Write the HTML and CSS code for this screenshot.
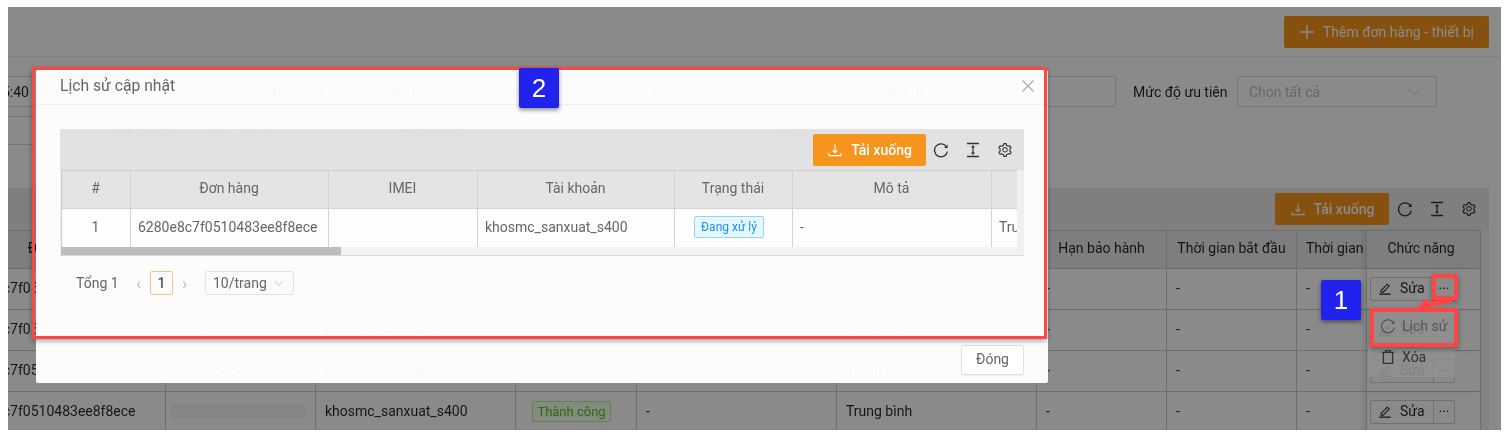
FILE: index.html
```html
<!DOCTYPE html>
<html lang="en">
<head>
  <meta charset="UTF-8" />
  <meta name="viewport" content="width=device-width, initial-scale=1.0" />
  <title>Lịch sử cập nhật</title>
  <link rel="stylesheet" href="styles.css">
</head>
<body>
  <svg class="defs" width="0" height="0">
    <symbol id="i-plus" viewBox="0 0 16 16"><path d="M8 1.5v13M1.5 8h13" fill="none" stroke="currentColor" stroke-width="1.6"/></symbol>
    <symbol id="i-down" viewBox="0 0 16 16"><path d="M8 2v8.5M5.6 8.2L8 10.6l2.4-2.4M2 11v2.6h12V11" fill="none" stroke="currentColor" stroke-width="1.1"/></symbol>
    <symbol id="i-reload" viewBox="0 0 16 16"><path d="M13.6 5A6.5 6.5 0 1 0 14.4 9.6" fill="none" stroke="currentColor" stroke-width="1.3"/><path d="M14.6 2.4v3.6h-3.6z" fill="currentColor"/></symbol>
    <symbol id="i-height" viewBox="0 0 16 16"><path d="M2 1.5h12M2 14.5h12" fill="none" stroke="currentColor" stroke-width="1.4"/><path d="M8 4v8" fill="none" stroke="currentColor" stroke-width="1.2"/><path d="M8 3l2 2.6H6zM8 13l-2-2.6h4z" fill="currentColor"/></symbol>
    <symbol id="i-gear" viewBox="0 0 1024 1024"><path fill="currentColor" d="M924.8 625.7l-65.5-56c3.1-19 4.7-38.4 4.7-57.8s-1.6-38.8-4.7-57.8l65.5-56a32.03 32.03 0 0 0 9.3-35.2l-.9-2.6a443.74 443.74 0 0 0-79.7-137.9l-1.8-2.1a32.12 32.12 0 0 0-35.1-9.5l-81.3 28.9c-30-24.6-63.5-44-99.7-57.6l-15.7-85a32.05 32.05 0 0 0-25.8-25.7l-2.7-.5c-52.1-9.4-106.9-9.4-159 0l-2.7.5a32.05 32.05 0 0 0-25.8 25.7l-15.8 85.4a351.86 351.86 0 0 0-99 57.4l-81.9-29.1a32 32 0 0 0-35.1 9.5l-1.8 2.1a446.02 446.02 0 0 0-79.7 137.9l-.9 2.6c-4.5 12.5-.8 26.5 9.3 35.2l66.3 56.6c-3.1 18.8-4.6 38-4.6 57.1 0 19.2 1.5 38.4 4.6 57.1L99 625.5a32.03 32.03 0 0 0-9.3 35.2l.9 2.6c18.1 50.4 44.9 96.9 79.7 137.9l1.8 2.1a32.12 32.12 0 0 0 35.1 9.5l81.9-29.1c29.8 24.5 63.1 43.9 99 57.4l15.8 85.4a32.05 32.05 0 0 0 25.8 25.7l2.7.5a449.4 449.4 0 0 0 159 0l2.7-.5a32.05 32.05 0 0 0 25.8-25.7l15.7-85a350 350 0 0 0 99.7-57.6l81.3 28.9a32 32 0 0 0 35.1-9.5l1.8-2.1c34.8-41.1 61.6-87.5 79.7-137.9l.9-2.6c4.5-12.3.8-26.3-9.3-35zM788.3 465.9c2.5 15.1 3.8 30.6 3.8 46.1s-1.3 31-3.8 46.1l-6.6 40.1 74.7 63.9a370.03 370.03 0 0 1-42.6 73.6L721 702.8l-31.4 25.8c-23.9 19.6-50.5 35-79.3 45.8l-38.1 14.3-17.9 97a377.5 377.5 0 0 1-85 0l-17.9-97.2-37.8-14.5c-28.5-10.8-55-26.2-78.7-45.7l-31.4-25.9-93.4 33.2c-17-22.9-31.2-47.6-42.6-73.6l75.5-64.5-6.5-40c-2.4-14.9-3.7-30.3-3.7-45.5 0-15.3 1.2-30.6 3.7-45.5l6.5-40-75.5-64.5c11.3-26.1 25.6-50.7 42.6-73.6l93.4 33.2 31.4-25.9c23.7-19.5 50.2-34.9 78.7-45.7l37.9-14.3 17.9-97.2c28.1-3.2 56.8-3.2 85 0l17.9 97 38.1 14.3c28.7 10.8 55.4 26.2 79.3 45.8l31.4 25.8 92.8-32.9c17 22.9 31.2 47.6 42.6 73.6L781.8 426l6.5 39.9zM512 326c-97.2 0-176 78.8-176 176s78.8 176 176 176 176-78.8 176-176-78.8-176-176-176zm79.2 255.2A111.6 111.6 0 0 1 512 614c-29.9 0-58-11.7-79.2-32.8A111.6 111.6 0 0 1 400 502c0-29.9 11.7-58 32.8-79.2C454 401.6 482.1 390 512 390c29.9 0 58 11.6 79.2 32.8A111.6 111.6 0 0 1 624 502c0 29.9-11.7 58-32.8 79.2z"/></symbol>
    <symbol id="i-edit" viewBox="0 0 16 16"><path d="M3.6 10.6l7-7 2.2 2.2-7 7H3.4zM1.5 15h13" fill="none" stroke="currentColor" stroke-width="1.2"/></symbol>
    <symbol id="i-trash" viewBox="0 0 16 16"><path d="M5.5 3V1.6h5V3M1.8 3.4h12.4M3.4 3.4v11h9.2v-11" fill="none" stroke="currentColor" stroke-width="1.3"/></symbol>
    <symbol id="i-chev" viewBox="0 0 16 16"><path d="M2 5l6 6 6-6" fill="none" stroke="currentColor" stroke-width="1"/></symbol>
    <symbol id="i-close" viewBox="0 0 12 12"><path d="M.5.5l11 11M11.5.5l-11 11" fill="none" stroke="currentColor" stroke-width="1.2"/></symbol>
  </svg>

  <div class="shot">
    <div class="page">
      <div class="topbar">
        <button class="btn-orange btn-add"><svg class="ic ic-plus"><use href="#i-plus"/></svg>Thêm đơn hàng - thiết bị</button>
      </div>

      <div class="filters filters-one">
        <div class="box box-range"><span>13/05/2022 10:15:40</span><span>13/05/2022 15:55:40</span></div>
        <label class="lb lb-account">Tài khoản</label>
        <div class="box box-account">54005 khosmc_sanxuat</div>
        <label class="lb lb-imei">IMEI</label>
        <div class="box box-imei"></div>
        <label class="lb lb-desc">Mô tả</label>
        <div class="box box-desc"></div>
        <label class="lb lb-prio">Mức độ ưu tiên</label>
        <div class="box box-select"><span class="ph">Chọn tất cả</span><svg class="ic-chev"><use href="#i-chev"/></svg></div>
      </div>

      <div class="filters filters-two">
        <div class="box box-left"></div>
        <label class="lb lb-type">Phân loại</label>
        <div class="box box-type"><span class="ph">Chọn tất cả</span></div>
        <div class="box box-order">Đơn hàng</div>
        <button class="btn-orange btn-search">Tìm kiếm</button>
        <button class="btn-reset">Đặt lại</button>
      </div>

      <div class="toolbar toolbar-page">
        <button class="btn-orange btn-dl"><svg class="ic"><use href="#i-down"/></svg>Tải xuống</button>
        <svg class="tool"><use href="#i-reload"/></svg>
        <svg class="tool"><use href="#i-height"/></svg>
        <svg class="tool"><use href="#i-gear"/></svg>
      </div>

      <div class="list-wrap">
        <table class="list">
          <colgroup>
            <col class="c1"><col class="c2"><col class="c3"><col class="c4"><col class="c5"><col class="c6"><col class="c7"><col class="c8"><col class="c9"><col class="c10">
          </colgroup>
          <thead>
            <tr>
              <th>Đơn hàng</th><th>IMEI</th><th>Tài khoản</th><th>Trạng thái</th><th>Mô tả</th><th>Mức độ ưu tiên</th><th>Hạn bảo hành</th><th>Thời gian bắt đầu</th><th class="cut">Thời gian kết thúc</th><th class="fixed">Chức năng</th>
            </tr>
          </thead>
          <tbody>
            <tr>
              <td>6280e8c7f0510483ee8f8ece</td><td>8e5485053834658</td><td>khosmc_sanxuat_s400</td><td><span class="tag-ok">Thành công</span></td><td>-</td><td>Trung bình</td><td>-</td><td>-</td><td class="cut">-</td>
              <td class="fixed"><div class="acts"><span class="act-edit"><svg class="ic-edit"><use href="#i-edit"/></svg>Sửa</span><span class="act-more">···</span></div></td>
            </tr>
            <tr>
              <td>6280e8c7f0510483ee8f8ece</td><td>8e5185053834686</td><td>khosmc_sanxuat_s400</td><td><span class="tag-ok">Thành công</span></td><td>-</td><td>Trung bình</td><td>-</td><td>-</td><td class="cut">-</td>
              <td class="fixed"><div class="acts"><span class="act-edit"><svg class="ic-edit"><use href="#i-edit"/></svg>Sửa</span><span class="act-more">···</span></div></td>
            </tr>
            <tr>
              <td>6280e8c7f0510483ee8f8ece</td><td>8e5485053834658</td><td>khosmc_sanxuat_s400</td><td><span class="tag-ok">Thành công</span></td><td>-</td><td>Trung bình</td><td>-</td><td>-</td><td class="cut">-</td>
              <td class="fixed"><div class="acts"><span class="act-edit"><svg class="ic-edit"><use href="#i-edit"/></svg>Sửa</span><span class="act-more">···</span></div></td>
            </tr>
            <tr>
              <td>6280e8c7f0510483ee8f8ece</td><td><span class="redact"></span></td><td>khosmc_sanxuat_s400</td><td><span class="tag-ok">Thành công</span></td><td>-</td><td>Trung bình</td><td>-</td><td>-</td><td class="cut">-</td>
              <td class="fixed"><div class="acts"><span class="act-edit"><svg class="ic-edit"><use href="#i-edit"/></svg>Sửa</span><span class="act-more">···</span></div></td>
            </tr>
          </tbody>
        </table>
      </div>
    </div>

    <div class="mask"></div>

    <div class="menu">
      <div class="menu-item menu-faded"><svg class="ic-menu"><use href="#i-reload"/></svg>Lịch sử</div>
      <div class="menu-item"><svg class="ic-menu"><use href="#i-trash"/></svg>Xóa</div>
    </div>

    <div class="modal">
      <div class="modal-head">
        <span>Lịch sử cập nhật</span>
        <svg class="modal-x"><use href="#i-close"/></svg>
      </div>
      <div class="modal-body">
        <div class="toolbar toolbar-modal">
          <button class="btn-orange btn-dl"><svg class="ic"><use href="#i-down"/></svg>Tải xuống</button>
          <svg class="tool"><use href="#i-reload"/></svg>
          <svg class="tool"><use href="#i-height"/></svg>
          <svg class="tool"><use href="#i-gear"/></svg>
        </div>
        <div class="log-wrap">
          <div class="log-scroll">
            <table class="log">
              <colgroup>
                <col class="l1"><col class="l2"><col class="l3"><col class="l4"><col class="l5"><col class="l6"><col class="l7">
              </colgroup>
              <thead>
                <tr><th>#</th><th>Đơn hàng</th><th>IMEI</th><th>Tài khoản</th><th>Trạng thái</th><th>Mô tả</th><th></th></tr>
              </thead>
              <tbody>
                <tr>
                  <td class="center">1</td><td>6280e8c7f0510483ee8f8ece</td><td></td><td>khosmc_sanxuat_s400</td><td><span class="tag-run">Đang xử lý</span></td><td>-</td><td>Trung bình</td>
                </tr>
              </tbody>
            </table>
            <div class="hbar"><div class="hbar-thumb"></div></div>
          </div>
        </div>
        <div class="pager">
          <span class="total">Tổng 1</span>
          <span class="arrow">‹</span>
          <span class="page-no">1</span>
          <span class="arrow">›</span>
          <span class="size">10/trang<svg class="ic-chev-sm"><use href="#i-chev"/></svg></span>
        </div>
      </div>
      <div class="modal-foot"><button class="btn-close">Đóng</button></div>
    </div>

    <div class="note note-modal"></div>
    <div class="note note-more"></div>
    <div class="note note-history"></div>
    <svg class="note-arrow" viewBox="0 0 44 18"><polygon points="2,14 12,2 14,6 38,1 39,6 16,11 17,15" fill="#ff4545"/></svg>
    <div class="step step-two">2</div>
    <div class="step step-one">1</div>
  </div>
</body>
</html>
```

FILE: styles.css
```css
* {
  box-sizing: border-box;
}

html, body {
  margin: 0;
  height: 438px;
  overflow: hidden;
  background: white;
}

body {
  font-family: Roboto, 'Liberation Sans', sans-serif;
  font-size: 14px;
  color: rgba(0,0,0,0.85);
}

.defs {
  position: absolute;
}

/* the reference is a slightly resampled screenshot */
.shot {
  position: relative;
  width: 1493px;
  height: 423px;
  margin: 7px 10px 8px 8px;
  overflow: hidden;
  background: white;
  filter: blur(0.3px);
}

button {
  font-family: inherit;
  font-size: 14px;
  border: none;
  padding: 0;
}

/* page behind the modal */
.page {
  width: 1493px;
  height: 423px;
}

.topbar {
  height: 50px;
  padding: 9px 12px 0 0;
  display: flex;
  justify-content: flex-end;
  border-bottom: 1px solid #eeeeee;
}

.btn-orange {
  background: #f7941d;
  color: white;
  border-radius: 2px;
  display: flex;
  align-items: center;
  justify-content: center;
  flex: none;
}

.btn-add {
  width: 205px;
  height: 32px;
  font-size: 14px;
}

.ic-plus {
  margin-right: 10px;
}

.ic {
  width: 16px;
  height: 16px;
  margin-right: 8px;
}

.filters {
  display: flex;
  align-items: center;
  white-space: nowrap;
}

.filters-one {
  height: 31px;
  margin-top: 19px;
  margin-left: -123px;
}

.filters-two {
  height: 29px;
  margin-top: 9px;
  margin-left: -58px;
}

.box {
  height: 100%;
  border: 1px solid #d9d9d9;
  border-radius: 2px;
  display: flex;
  align-items: center;
  padding: 0 11px;
  flex: none;
}

.lb {
  flex: none;
}

.box-range { width: 340px; gap: 55px; }
.lb-account { margin-left: 37px; width: 110px; }
.box-account { width: 268px; }
.lb-imei { margin-left: 10px; width: 40px; }
.box-imei { width: 180px; }
.lb-desc { margin-left: 17px; width: 48px; }
.box-desc { width: 181px; }
.lb-prio { margin-left: 17px; width: 104px; }
.box-select { width: 200px; justify-content: space-between; }

.ph {
  color: #bfbfbf;
}

.ic-chev {
  width: 14px;
  height: 14px;
  color: #bfbfbf;
  margin-right: 4px;
}

.box-left { width: 146px; }
.lb-type { margin-left: 22px; width: 68px; }
.box-type { width: 198px; }
.box-order { width: 87px; padding-left: 18px; }

.btn-search {
  margin-left: 199px;
  width: 88px;
  height: 33px;
  opacity: 0.25;
}

.btn-reset {
  margin-left: 12px;
  width: 60px;
  height: 29px;
  background: white;
}

.toolbar {
  display: flex;
  align-items: center;
  justify-content: flex-end;
  padding-right: 12px;
  background: #ebebeb;
}

.toolbar-page {
  height: 42px;
  margin-top: 43px;
  margin-right: 12px;
}

.btn-dl {
  width: 114px;
  height: 32px;
  font-weight: 500;
}

.tool {
  width: 16px;
  height: 16px;
  margin-left: 16px;
  color: #333;
}

.btn-dl + .tool {
  margin-left: 8px;
}

.list-wrap {
  width: 1481px;
  background: #f2f2f2;
  padding-right: 8px;
  margin-left: 0;
}

.list {
  width: 1531px;
  margin-left: -58px;
  table-layout: fixed;
  border-collapse: separate;
  border-spacing: 0;
  background: white;
}

.c1 { width: 216px; }
.c2 { width: 150px; }
.c3 { width: 200px; }
.c4 { width: 121px; }
.c5 { width: 200px; }
.c6 { width: 200px; }
.c7 { width: 130px; }
.c8 { width: 130px; }
.c9 { width: 69px; }
.c10 { width: 115px; }

.list th, .list td {
  height: 41px;
  padding: 0 9px 2px;
  font-weight: 400;
  white-space: nowrap;
  overflow: hidden;
  border-right: 1px solid #cccccc;
  border-bottom: 1px solid #cccccc;
}

.list td:first-child {
  padding-left: 6px;
}

.list th {
  height: 39px;
  padding-bottom: 3px;
  background: #e9e9e9;
  text-align: center;
  border-top: 1px solid #d0d0d0;
}

.list .cut {
  text-align: left;
  padding-right: 0;
  border-right: none;
}

.list .fixed {
  box-shadow: -4px 0 4px rgba(0,0,0,0.08);
  position: relative;
  border-left: 1px solid #cccccc;
  padding: 0 4px 0 3px;
}

.list th.fixed {
  padding-right: 8px;
  padding-bottom: 3px;
}

.acts {
  display: flex;
  height: 24px;
  border: 1px solid #cfcfcf;
  border-radius: 2px;
  width: 85px;
}

.act-edit {
  width: 63px;
  display: flex;
  align-items: center;
  padding: 0 0 2px 7px;
  border-right: 1px solid #cfcfcf;
}

.ic-edit {
  width: 14px;
  height: 14px;
  margin-right: 8px;
}

.act-more {
  flex: 1;
  text-align: center;
  line-height: 22px;
}

.tag-ok {
  display: inline-block;
  height: 21px;
  width: 79px;
  margin-left: 7px;
  line-height: 19px;
  text-align: center;
  font-size: 13px;
  color: #52c41a;
  background: #f6ffed;
  border: 1px solid #b7eb8f;
  border-radius: 2px;
}

.redact {
  display: block;
  height: 14px;
  width: 135px;
  margin-left: -4px;
  background: #f6f6f6;
}

.mask {
  position: absolute;
  inset: 0;
  background: rgba(0,0,0,0.46);
}

/* action dropdown, still fading in */
.menu {
  position: absolute;
  left: 1360px;
  top: 303px;
  width: 87px;
  height: 67px;
  background: rgba(143,143,143,0.88);
}

.menu-item {
  display: flex;
  align-items: center;
  height: 31px;
  padding-left: 12px;
  color: #333;
}

.menu-faded {
  color: #555;
}

.ic-menu {
  width: 16px;
  height: 16px;
  margin-right: 6px;
}

/* modal */
.modal {
  position: absolute;
  left: 28px;
  top: 63px;
  width: 1012px;
  height: 313px;
  background: rgba(255,255,255,0.975);
  border-radius: 2px;
  color: #666;
  display: flex;
  flex-direction: column;
}

.modal-head {
  height: 35px;
  padding: 0 14px 3px 24px;
  display: flex;
  align-items: center;
  justify-content: space-between;
  border-bottom: 1px solid #f0f0f0;
  font-size: 15.7px;
}

.modal-x {
  width: 12px;
  height: 12px;
  color: #aaa;
}

.modal-body {
  padding: 24px 24px 0;
}

.toolbar-modal {
  height: 41px;
  background: rgba(0,0,0,0.1);
  padding-right: 11px;
}

.toolbar-modal .btn-dl {
  width: 113px;
}

.toolbar-modal .btn-dl + .tool {
  margin-left: 7px;
}

.log-wrap {
  border-bottom: 1px solid #d9d9d9;
  padding-left: 1px;
  background: #f0f0f0;
}

.log-scroll {
  width: 956px;
  overflow: hidden;
}

.log {
  width: 1100px;
  table-layout: fixed;
  border-collapse: separate;
  border-spacing: 0;
}

.l1 { width: 70px; }
.l2 { width: 198px; }
.l3 { width: 149px; }
.l4 { width: 197px; }
.l5 { width: 118px; }
.l6 { width: 199px; }
.l7 { width: 169px; }

.log th, .log td {
  padding: 0 8px 2px 7px;
  font-weight: 400;
  white-space: nowrap;
  overflow: hidden;
  border-right: 1px solid #d2d2d2;
}

.log th {
  height: 39px;
  padding-bottom: 3px;
  text-align: center;
  background: #e4e4e4;
  border-top: 1px solid #cccccc;
  border-bottom: 1px solid #d2d2d2;
}

.log th:first-child, .log td:first-child {
  border-left: 1px solid #cccccc;
}

.log td {
  height: 38px;
  background: #fdfdfd;
}

.center {
  text-align: center;
}

.tag-run {
  display: inline-block;
  width: 70px;
  height: 22px;
  margin-left: 12px;
  line-height: 20px;
  text-align: center;
  font-size: 12px;
  color: #1890ff;
  background: #e6f7ff;
  border: 1px solid #91d5ff;
  border-radius: 2px;
}

.hbar {
  height: 8px;
  background: #f2f2f2;
}

.hbar-thumb {
  width: 280px;
  height: 8px;
  background: #bdbdbd;
}

.pager {
  display: flex;
  align-items: center;
  height: 24px;
  margin-top: 15px;
  padding-left: 16px;
}

.total {
  width: 54px;
}

.arrow {
  width: 17px;
  text-align: center;
  color: #bbb;
  font-size: 17px;
  line-height: 20px;
}

.page-no {
  width: 23px;
  height: 24px;
  line-height: 22px;
  margin: 0 3px;
  text-align: center;
  color: #555;
  font-weight: 500;
  border: 1px solid #f9c182;
  border-radius: 2px;
}

.size {
  display: flex;
  align-items: center;
  width: 89px;
  height: 24px;
  margin-left: 12px;
  padding-left: 7px;
  border: 1px solid #e3e3e3;
  border-radius: 2px;
}

.ic-chev-sm {
  width: 12px;
  height: 12px;
  margin-left: 6px;
  color: #bbb;
}

.modal-foot {
  margin-top: auto;
  padding: 0 24px 8px;
  display: flex;
  justify-content: flex-end;
}

.btn-close {
  width: 63px;
  height: 30px;
  padding-bottom: 3px;
  background: white;
  color: #666;
  border: 1px solid #e3e3e3;
  border-radius: 2px;
  box-shadow: 0 1px 1px rgba(0,0,0,0.05);
}

/* red and blue notes drawn on the screenshot */
.note {
  position: absolute;
  border: 4px solid #ff4545;
  box-shadow: 0 2px 5px rgba(0,0,0,0.35);
}

.note-modal { left: 24px; top: 60px; width: 1015px; height: 272px; border-width: 3px; }
.note-more { left: 1424px; top: 267px; width: 26px; height: 26px; }
.note-history { left: 1362px; top: 301px; width: 88px; height: 39px; }

.note-arrow {
  position: absolute;
  left: 1406px;
  top: 289px;
  width: 44px;
  height: 18px;
}

.step {
  position: absolute;
  width: 40px;
  height: 40px;
  background: #2222ee;
  color: white;
  border-radius: 2px;
  font-family: 'Liberation Sans', sans-serif;
  font-size: 26px;
  line-height: 40px;
  text-align: center;
  box-shadow: 0 2px 4px rgba(0,0,0,0.45);
}

.step-two { left: 511px; top: 61px; }
.step-one { left: 1313px; top: 273px; }
```
